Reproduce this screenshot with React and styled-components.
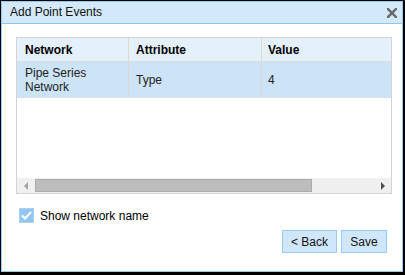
import React, { useState } from "react";
import styled, { createGlobalStyle } from "styled-components";

// 기본 스타일
const GlobalStyle = createGlobalStyle`
    html, body {
        margin: 0;
        padding: 0;
        background: #fff;
    }
    * {
        box-sizing: border-box;
    }
`;

// 바깥 검은 테두리
const Frame = styled.div`
    width: 405px;
    height: 275px;
    border-style: solid;
    border-color: #000;
    border-width: 1px 2px 3px 1px;
    font-family: "Liberation Sans", Arial, sans-serif;
    font-size: 12px;
    color: #000;
`;

const Dialog = styled.div`
    height: 100%;
    display: flex;
    flex-direction: column;
    border: 1px solid #94c9f2;
    background: #fff;
`;

// 제목 표시줄
const TitleBar = styled.div`
    height: 22px;
    display: flex;
    align-items: center;
    justify-content: space-between;
    padding: 0 4px 1px 8px;
    background: #d3e8fa;
    border-bottom: 1px solid #8cc4ef;
`;

const Title = styled.span`
    font-size: 12px;
    color: #111;
`;

const CloseButton = styled.button`
    border: none;
    background: none;
    padding: 0;
    width: 12px;
    height: 12px;
    display: flex;
    align-items: center;
    justify-content: center;
    cursor: pointer;
    margin-top: 2px;
`;

const Body = styled.div`
    flex: 1;
    display: flex;
    flex-direction: column;
    padding: 13px 10px 0 14px;
`;

// 테이블 영역
const Grid = styled.div`
    width: 376px;
    height: 157px;
    border: 1px solid #d4d4d4;
    display: flex;
    flex-direction: column;
    overflow: hidden;
`;

const Rows = styled.div`
    flex: 1;
    overflow: hidden;
`;

const Row = styled.div`
    display: grid;
    grid-template-columns: 112px 133px 150px;
    height: ${({ $header }) => ($header ? "24px" : "36px")};
    background: ${({ $header }) => ($header ? "#e4f1fc" : "#cde4f8")};
    border-bottom: 1px solid ${({ $header }) => ($header ? "#dcdcd4" : "#d6e4ef")};
    font-weight: ${({ $header }) => ($header ? "bold" : "normal")};
`;

const Cell = styled.div`
    display: flex;
    align-items: center;
    padding-left: ${({ $pad }) => $pad || 7}px;
    padding-top: ${({ $header }) => ($header ? 0 : 1)}px;
    line-height: 14px;
    border-right: 1px solid #dcd8cc;
    color: ${({ $header }) => ($header ? "#000" : "#222")};
`;

// 가로 스크롤바
const ScrollBar = styled.div`
    height: 15px;
    display: flex;
    align-items: stretch;
    background: #f0f0f0;
`;

const ArrowButton = styled.div`
    width: 17px;
    display: flex;
    align-items: center;
    justify-content: center;

    &::before {
        content: "";
        width: 0;
        height: 0;
        border-top: 4px solid transparent;
        border-bottom: 4px solid transparent;
        ${({ $dir }) =>
            $dir === "left"
                ? "border-right: 4px solid #a3a3a3;"
                : "border-left: 4px solid #505050;"}
    }
`;

const Track = styled.div`
    flex: 1;
    display: flex;
    align-items: center;
    padding: 0 1px;
`;

const Thumb = styled.div`
    height: 13px;
    background: #bdbdbd;
    border: 1px solid #acacac;
`;

// 체크박스
const CheckRow = styled.label`
    display: flex;
    align-items: center;
    gap: 6px;
    margin: 14px 0 0 3px;
    cursor: pointer;
`;

const CheckBox = styled.span`
    width: 15px;
    height: 15px;
    display: flex;
    align-items: center;
    justify-content: center;
    background: ${({ $checked }) => ($checked ? "#92c6f0" : "#fff")};
    border: 1px solid #a9d2f3;
`;

const ButtonRow = styled.div`
    display: flex;
    justify-content: flex-end;
    gap: 4px;
    margin: 7px 5px 0 0;
`;

const Button = styled.button`
    height: 23px;
    width: ${({ $w }) => $w}px;
    padding: 0;
    font-family: "Liberation Sans", Arial, sans-serif;
    font-size: 12px;
    color: #111;
    background: #d0e7fb;
    border: 1px solid #96cbf4;
    cursor: pointer;
`;

const columns = ["Network", "Attribute", "Value"];

function App() {
    const [showName, setShowName] = useState(true);

    return (
        <>
            <GlobalStyle />
            <Frame>
                <Dialog>
                    <TitleBar>
                        <Title>Add Point Events</Title>
                        <CloseButton>
                            <svg width="10" height="10" viewBox="0 0 10 10">
                                <path d="M1 1 L9 9 M9 1 L1 9" stroke="#666" strokeWidth="2.4" strokeLinecap="square" />
                            </svg>
                        </CloseButton>
                    </TitleBar>

                    <Body>
                        <Grid>
                            <Rows>
                                <Row $header>
                                    {columns.map((c, i) => (
                                        <Cell key={c} $header $pad={i === 0 ? 8 : i === 1 ? 7 : 6}>
                                            {c}
                                        </Cell>
                                    ))}
                                </Row>
                                <Row>
                                    <Cell $pad={8}>Pipe Series<br />Network</Cell>
                                    <Cell>Type</Cell>
                                    <Cell $pad={6}>4</Cell>
                                </Row>
                            </Rows>
                            <ScrollBar>
                                <ArrowButton $dir="left" />
                                <Track>
                                    <Thumb style={{ width: "82%" }} />
                                </Track>
                                <ArrowButton $dir="right" />
                            </ScrollBar>
                        </Grid>

                        <CheckRow onClick={() => setShowName(!showName)}>
                            <CheckBox $checked={showName}>
                                {showName && (
                                    <svg width="11" height="9" viewBox="0 0 11 9">
                                        <path d="M1 4.5 L4 7.5 L10 1" stroke="#fff" strokeWidth="2.2" fill="none" />
                                    </svg>
                                )}
                            </CheckBox>
                            Show network name
                        </CheckRow>

                        <ButtonRow>
                            <Button $w={55}>&lt; Back</Button>
                            <Button $w={46}>Save</Button>
                        </ButtonRow>
                    </Body>
                </Dialog>
            </Frame>
        </>
    );
}

export default App;
